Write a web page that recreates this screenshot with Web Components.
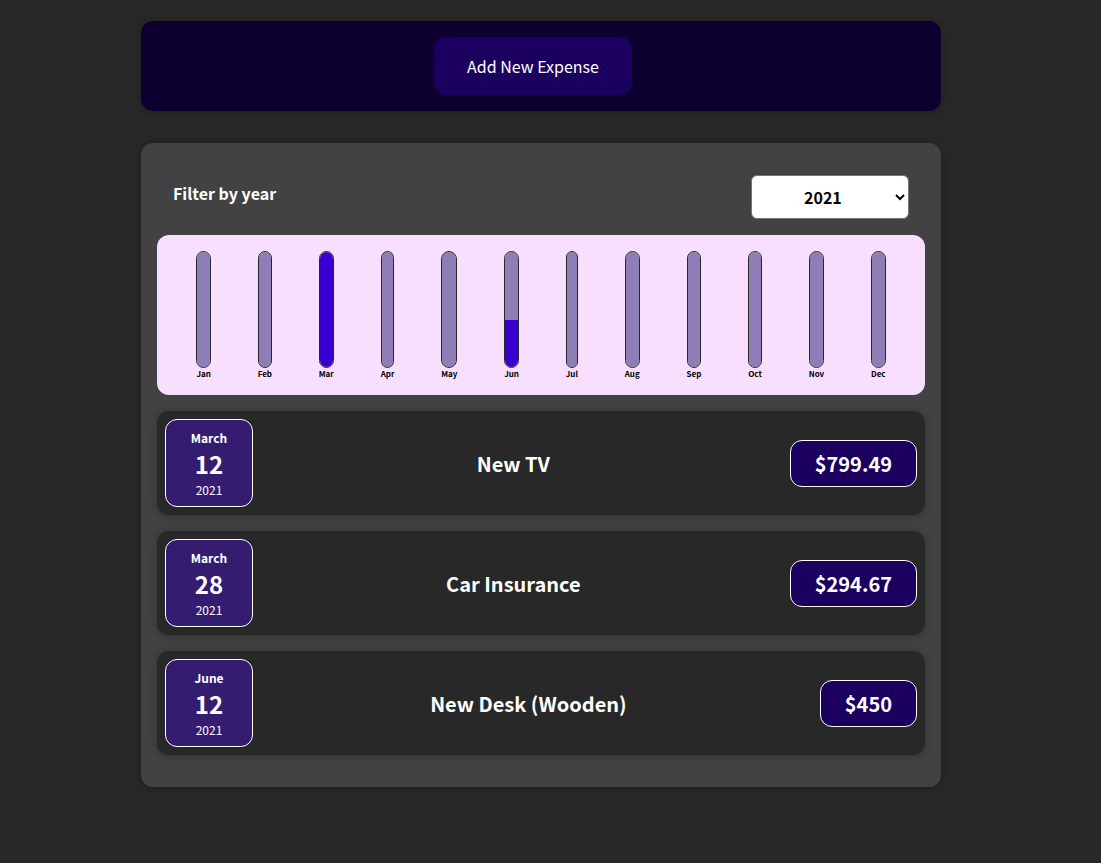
<!DOCTYPE html>
<html lang="en">
<head>
<meta charset="utf-8">
<meta name="viewport" content="width=device-width, initial-scale=1">
<title>Expenses</title>
<style>
  * { box-sizing: border-box; }
  body {
    margin: 0;
    padding: 21px 19px 32px 0;
    background: #282828;
    color: #fff;
    font-family: "Noto Sans CJK JP", "Noto Sans", sans-serif;
  }
</style>
</head>
<body>
<expense-app></expense-app>

<script>
  const define = (name, html, setup) => {
    const template = document.createElement('template');
    template.innerHTML = '<style>*, :host { box-sizing: border-box; }</style>' + html;
    customElements.define(name, class extends HTMLElement {
      connectedCallback() {
        if (this.shadowRoot) return;
        const root = this.attachShadow({ mode: 'open' });
        root.append(template.content.cloneNode(true));
        if (setup) setup(this, root);
      }
    });
  };

  define('ui-card', `
    <style>
      :host {
        display: block;
        border-radius: 12px;
        box-shadow: 0 1px 8px rgba(0, 0, 0, .25);
      }
    </style>
    <slot></slot>`);

  define('new-expense', `
    <style>
      :host { display: block; }
      ui-card { padding: 16px; background: #0d0030; text-align: center; }
      button {
        display: block;
        margin: 0 auto;
        padding: 16px 32px;
        border: 1px solid #1b0060;
        border-radius: 12px;
        background: #1b0060;
        color: #fff;
        font: 400 16px/24px "Noto Sans CJK JP", "Noto Sans", sans-serif;
        cursor: pointer;
      }
      .actions { padding-right: 16px; }
    </style>
    <ui-card><div class="actions"><button type="button">Add New Expense</button></div></ui-card>`);

  define('expense-filter', `
    <style>
      :host { display: block; padding: 16px; }
      .control { display: flex; align-items: center; justify-content: space-between; }
      label { font-size: 16px; font-weight: 700; line-height: 24px; padding-bottom: 8px; }
      select {
        height: 44px;
        padding: 8px 50px 8px 48px;
        border: 1px solid #767676;
        border-radius: 6px;
        background-color: #fff;
        color: #000;
        font: 700 16px/24px "Noto Sans CJK JP", "Noto Sans", sans-serif;
      }
    </style>
    <div class="control">
      <label for="year">Filter by year</label>
      <select id="year">
        <option>2022</option>
        <option selected>2021</option>
        <option>2020</option>
        <option>2019</option>
      </select>
    </div>`);

  define('chart-bar', `
    <style>
      :host { display: flex; flex-direction: column; height: 100%; }
      .track {
        flex: 1;
        border: 1px solid #282828;
        border-radius: 12px;
        background: linear-gradient(to top, #3700d1 var(--value), #8e7eb8 0) no-repeat padding-box;
      }
      .label { color: #000; font-size: 8px; font-weight: 700; line-height: 11px; text-align: center; }
    </style>
    <div class="track"></div>
    <div class="label"><slot></slot></div>`,
    (host) => {
      host.style.setProperty('--value', (host.getAttribute('value') || 0) + '%');
    });

  define('expense-chart', `
    <style>
      :host {
        display: flex;
        justify-content: space-around;
        height: 160px;
        padding: 16px;
        border-radius: 12px;
        background: #f8dfff;
      }
    </style>`,
    (host, root) => {
      const values = { Mar: 100, Jun: 41 };
      for (const month of 'Jan Feb Mar Apr May Jun Jul Aug Sep Oct Nov Dec'.split(' ')) {
        const bar = document.createElement('chart-bar');
        bar.setAttribute('value', values[month] || 0);
        bar.textContent = month;
        root.append(bar);
      }
    });

  define('expense-date', `
    <style>
      :host {
        display: flex;
        flex-direction: column;
        align-items: center;
        justify-content: center;
        width: 88px;
        height: 88px;
        border: 1px solid #fff;
        border-radius: 12px;
        background: #341d70;
      }
      .month { font-size: 12px; font-weight: 700; line-height: 17px; }
      .day { font-size: 24px; font-weight: 700; line-height: 35px; }
      .year { font-size: 12px; line-height: 17px; }
    </style>
    <div class="month"></div><div class="day"></div><div class="year"></div>`,
    (host, root) => {
      for (const part of ['month', 'day', 'year'])
        root.querySelector('.' + part).textContent = host.getAttribute(part);
    });

  define('expense-item', `
    <style>
      :host { display: block; }
      ui-card {
        display: flex;
        align-items: center;
        padding: 8px;
        background: #282828;
      }
      h2 {
        flex: 1;
        margin: 0 16px 0 0;
        font-size: 20px;
        font-weight: 700;
        line-height: 29px;
        text-align: center;
      }
      .price {
        padding: 8px 24px;
        border: 1px solid #fff;
        border-radius: 12px;
        background: #1b0060;
        font-size: 20px;
        font-weight: 700;
        line-height: 29px;
      }
    </style>
    <ui-card>
      <slot name="date"></slot>
      <h2><slot></slot></h2>
      <div class="price"><slot name="price"></slot></div>
    </ui-card>`);

  define('expense-app', `
    <style>
      :host {
        display: flex;
        flex-direction: column;
        gap: 32px;
        max-width: 800px;
        margin: 0 auto;
      }
      .panel { padding: 16px 16px 32px; background: #424242; }
      ul {
        display: flex;
        flex-direction: column;
        gap: 16px;
        margin: 16px 0 0;
        padding: 0;
        list-style: none;
      }
    </style>
    <new-expense></new-expense>
    <ui-card class="panel">
      <expense-filter></expense-filter>
      <expense-chart></expense-chart>
      <ul>
        <li><expense-item>
          <expense-date slot="date" month="March" day="12" year="2021"></expense-date>
          New TV<span slot="price">$799.49</span>
        </expense-item></li>
        <li><expense-item>
          <expense-date slot="date" month="March" day="28" year="2021"></expense-date>
          Car Insurance<span slot="price">$294.67</span>
        </expense-item></li>
        <li><expense-item>
          <expense-date slot="date" month="June" day="12" year="2021"></expense-date>
          New Desk (Wooden)<span slot="price">$450</span>
        </expense-item></li>
      </ul>
    </ui-card>`);
</script>
</body>
</html>
